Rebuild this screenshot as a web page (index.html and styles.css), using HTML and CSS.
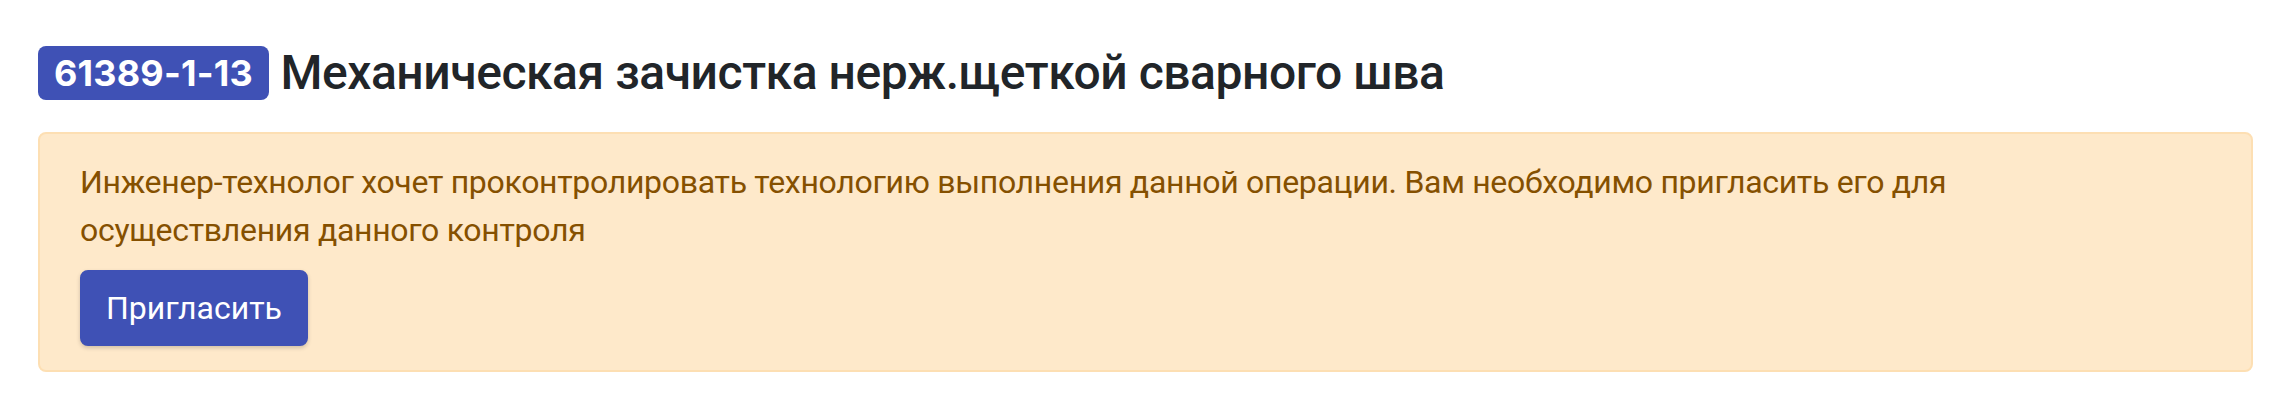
FILE: index.html
```html
<!DOCTYPE html>
<html lang="ru">
<head>
<meta charset="utf-8">
<title>61389-1-13</title>
<link rel="stylesheet" href="styles.css">
</head>
<body>
<div class="page">
  <h4 class="title"><span class="badge">61389-1-13</span> Механическая зачистка нерж.щеткой сварного шва</h4>
  <div class="alert">
    <p class="alert-text">Инженер-технолог хочет проконтролировать технологию выполнения данной операции. Вам необходимо пригласить его для осуществления данного контроля</p>
    <button class="btn" type="button">Пригласить</button>
  </div>
</div>
</body>
</html>
```
FILE: styles.css
```css
html, body {
  margin: 0;
  padding: 0;
  background: #ffffff;
}
body {
  font-family: Roboto, "Liberation Sans", Arial, sans-serif;
  color: #212529;
  font-size: 32px;
  line-height: 1.5;
}
.page {
  padding: 44px 21px 0 38px;
}
.title {
  margin: 0 0 30px 0;
  font-size: 48px;
  font-weight: 500;
  line-height: 1.2;
  color: #212529;
  letter-spacing: -0.45px;
}
.badge {
  display: inline-block;
  font-family: Inter, Roboto, sans-serif;
  background: #3f51b5;
  color: #ffffff;
  font-size: 36px;
  font-weight: 700;
  line-height: 1;
  padding: 9px 16px;
  border-radius: 8px;
  vertical-align: 3px;
  letter-spacing: 0.2px;
}
.alert {
  background: #fee9ca;
  border: 2px solid #fddfb3;
  border-radius: 8px;
  padding: 24px 128px 24px 40px;
  color: #855000;
}
.alert-text {
  margin: 0 0 16px 0;
  letter-spacing: -0.3px;
}
.btn {
  display: inline-block;
  font-family: inherit;
  font-size: 32px;
  line-height: 48px;
  color: #ffffff;
  background: #3f51b5;
  border: 2px solid #3f51b5;
  border-radius: 8px;
  padding: 12px 24px;
  box-shadow: 0 2px 4px rgba(0, 0, 0, 0.18);
}
```
